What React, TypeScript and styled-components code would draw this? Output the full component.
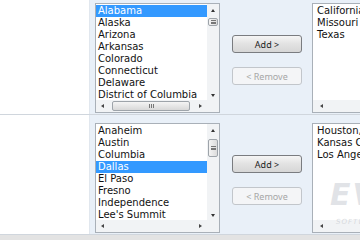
import styled, { createGlobalStyle } from "styled-components";

// two picker rows: source list, add/remove buttons, chosen list
interface IPicker {
  id: string;
  source: string[];
  selected: number;
  chosen: string[];
  thumbTop: number;
  thumbHeight: number;
  hThumb: boolean;
}

const pickers: IPicker[] = [
  {
    id: "states",
    source: [
      "Alabama",
      "Alaska",
      "Arizona",
      "Arkansas",
      "Colorado",
      "Connecticut",
      "Delaware",
      "District of Columbia",
    ],
    selected: 0,
    chosen: ["California", "Missouri", "Texas"],
    thumbTop: 6,
    thumbHeight: 8,
    hThumb: true,
  },
  {
    id: "cities",
    source: [
      "Anaheim",
      "Austin",
      "Columbia",
      "Dallas",
      "El Paso",
      "Fresno",
      "Independence",
      "Lee's Summit",
    ],
    selected: 3,
    chosen: ["Houston, TX", "Kansas City, MO", "Los Angeles, CA"],
    thumbTop: 7,
    thumbHeight: 18,
    hThumb: false,
  },
];

function App() {
  return (
    <>
      <GlobalStyle />
      <Table>
        {pickers.map((p, i) => (
          <Row key={p.id} $first={i === 0}>
            <LabelCell />
            <FieldCell>
              <ListBox>
                <Items>
                  {p.source.map((s, idx) => (
                    <Item key={s} $selected={idx === p.selected}>
                      {s}
                    </Item>
                  ))}
                </Items>
                <VScroll>
                  <ArrowUp />
                  <VThumb
                    style={{ marginTop: p.thumbTop, height: p.thumbHeight }}
                  >
                    <Grip />
                  </VThumb>
                  <Spacer />
                  <ArrowDown />
                </VScroll>
                <HScroll>
                  <ArrowLeft />
                  {p.hThumb ? (
                    <HThumb>
                      <HGrip />
                    </HThumb>
                  ) : (
                    <Spacer />
                  )}
                  <ArrowRight />
                </HScroll>
                <Corner />
              </ListBox>
              <Buttons>
                <Button>Add &gt;</Button>
                <Button disabled>&lt; Remove</Button>
              </Buttons>
              <ChosenBox>
                <Items>
                  {p.chosen.map((c) => (
                    <Item key={c}>{c}</Item>
                  ))}
                </Items>
                <ChosenScroll>
                  <ArrowLeft />
                </ChosenScroll>
              </ChosenBox>
            </FieldCell>
          </Row>
        ))}
        <Watermark>
          <Logo>EV</Logo>
          <LogoSub>SOFTWARE</LogoSub>
        </Watermark>
      </Table>
    </>
  );
}

export default App;

const GlobalStyle = createGlobalStyle`
  body {
    margin: 0;
    background: #e3e3e3;
    font-family: "DejaVu Sans", Verdana, sans-serif;
  }
`;

const Table = styled.div`
  position: relative;
  width: 360px;
  height: 240px;
  overflow: hidden;
  background: #e3e3e3;
`;

const Row = styled.div<{ $first: boolean }>`
  display: flex;
  height: 119px;
  margin-top: ${(props) => (props.$first ? "-5px" : "0")};
  border-bottom: 1px solid #d0d6dd;
  background: #fff;
`;

const LabelCell = styled.div`
  width: 89px;
  flex-shrink: 0;
  background: #fff;
  border-right: 1px solid #e1e7ee;
`;

const FieldCell = styled.div`
  flex: 1;
  display: flex;
  align-items: flex-start;
  padding: 8px 0 0 5px;
  background: #e9f0f8;
  overflow: hidden;
`;

const ListBox = styled.div`
  flex-shrink: 0;
  width: 125px;
  height: 110px;
  box-sizing: border-box;
  border: 1px solid #a9b0b8;
  background: #fff;
  display: grid;
  grid-template-columns: 1fr 12px;
  grid-template-rows: 1fr 12px;
`;

const Items = styled.div`
  overflow: hidden;
  padding-top: 1px;
  background: #fff;
`;

const Item = styled.div<{ $selected?: boolean }>`
  height: 12px;
  line-height: 12px;
  padding-left: 2px;
  font-size: 10px;
  white-space: nowrap;
  color: ${(props) => (props.$selected ? "#fff" : "#111")};
  background: ${(props) => (props.$selected ? "#3399ff" : "transparent")};
`;

const VScroll = styled.div`
  display: flex;
  flex-direction: column;
  align-items: center;
  background: #f1f3f5;
  padding: 5px 0 3px;
`;

const Spacer = styled.div`
  flex: 1;
`;

const ArrowUp = styled.div`
  width: 0;
  height: 0;
  border-left: 2.5px solid transparent;
  border-right: 2.5px solid transparent;
  border-bottom: 3px solid #333;
`;

const ArrowDown = styled.div`
  width: 0;
  height: 0;
  border-left: 2.5px solid transparent;
  border-right: 2.5px solid transparent;
  border-top: 3px solid #333;
`;

const ArrowLeft = styled.div`
  width: 0;
  height: 0;
  border-top: 2.5px solid transparent;
  border-bottom: 2.5px solid transparent;
  border-right: 3px solid #444;
`;

const ArrowRight = styled.div`
  width: 0;
  height: 0;
  border-top: 2.5px solid transparent;
  border-bottom: 2.5px solid transparent;
  border-left: 3px solid #444;
`;

const VThumb = styled.div`
  width: 10px;
  box-sizing: border-box;
  border: 1px solid #9ea4aa;
  border-radius: 2px;
  background: linear-gradient(to right, #f4f4f4, #dcdcdc);
  display: flex;
  align-items: center;
  justify-content: center;
`;

const Grip = styled.div`
  width: 5px;
  height: 4px;
  border-top: 1px solid #777;
  border-bottom: 1px solid #777;
  box-sizing: border-box;
  position: relative;
  &::after {
    content: "";
    position: absolute;
    left: 0;
    right: 0;
    top: 1px;
    border-top: 1px solid #777;
  }
`;

const HScroll = styled.div`
  display: flex;
  align-items: center;
  background: #f1f3f5;
  padding: 0 5px;
  gap: 5px;
`;

const HThumb = styled.div`
  flex: 1;
  height: 10px;
  margin: 0 4px 0 3px;
  box-sizing: border-box;
  border: 1px solid #9ea4aa;
  border-radius: 2px;
  background: linear-gradient(#f4f4f4, #d8d8d8);
  display: flex;
  align-items: center;
  justify-content: center;
`;

const HGrip = styled.div`
  width: 5px;
  height: 4px;
  border-left: 1px solid #777;
  border-right: 1px solid #777;
  box-sizing: border-box;
  position: relative;
  &::after {
    content: "";
    position: absolute;
    top: 0;
    bottom: 0;
    left: 1px;
    border-left: 1px solid #777;
  }
`;

const Corner = styled.div`
  background: #f1f3f5;
`;

const Buttons = styled.div`
  flex-shrink: 0;
  width: 70px;
  display: flex;
  flex-direction: column;
  gap: 14px;
  padding: 32px 10px 0 12px;
`;

const Button = styled.button`
  width: 70px;
  height: 18px;
  padding: 0;
  border: 1px solid #7a7c80;
  border-radius: 3px;
  background: linear-gradient(#f6f6f6, #e2e2e2 50%, #d6d6d6);
  font-family: "Noto Sans", "DejaVu Sans", sans-serif;
  font-size: 9px;
  color: #222;
  &:disabled {
    border-color: #c2c6cb;
    background: #f4f5f7;
    color: #a6a6a6;
  }
`;

const ChosenBox = styled.div`
  flex-shrink: 0;
  width: 110px;
  height: 110px;
  box-sizing: border-box;
  border: 1px solid #a9b0b8;
  background: #fff;
  display: grid;
  grid-template-rows: 1fr 12px;
  ${Item} {
    padding-left: 4px;
  }
`;

const ChosenScroll = styled.div`
  display: flex;
  align-items: center;
  padding-left: 7px;
  background: #f1f3f5;
`;

const Watermark = styled.div`
  position: absolute;
  left: 330px;
  top: 180px;
  display: flex;
  flex-direction: column;
  pointer-events: none;
`;

const Logo = styled.span`
  font-family: "DejaVu Sans", sans-serif;
  font-weight: bold;
  font-style: italic;
  font-size: 30px;
  line-height: 30px;
  color: rgba(200, 204, 210, 0.55);
  letter-spacing: 2px;
`;

const LogoSub = styled.span`
  margin-top: 8px;
  margin-left: 6px;
  font-family: "DejaVu Sans", sans-serif;
  font-style: italic;
  font-size: 7px;
  color: rgba(190, 194, 200, 0.55);
  letter-spacing: 1px;
`;
